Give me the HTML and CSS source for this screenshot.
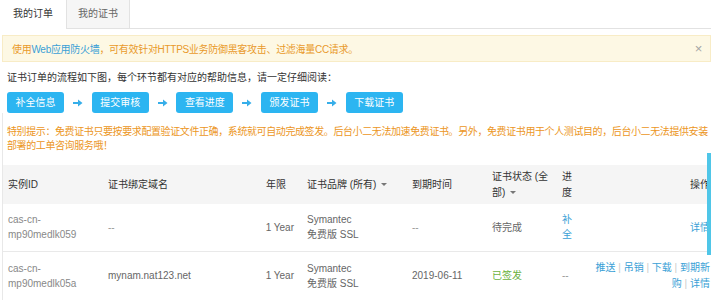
FILE: index.html
```html
<!DOCTYPE html>
<html lang="zh-CN">
<head>
  <meta charset="UTF-8">
  <meta name="viewport" content="width=device-width, initial-scale=1.0">
  <title>我的订单</title>
  <link rel="stylesheet" href="styles.css">
</head>
<body>
  <div class="tabs">
    <a class="tab active">我的订单</a>
    <a class="tab">我的证书</a>
  </div>

  <div class="alert">
    <span>使用<a class="link">Web应用防火墙</a>，可有效针对HTTPS业务防御黑客攻击、过滤海量CC请求。</span>
    <span class="close">×</span>
  </div>

  <p class="intro">证书订单的流程如下图，每个环节都有对应的帮助信息，请一定仔细阅读：</p>

  <div class="steps">
    <span class="step">补全信息</span>
    <span class="arrow"><svg width="10" height="8" viewBox="0 0 10 8"><path d="M0 3h5V0.5L9.5 4 5 7.5V5H0z"/></svg></span>
    <span class="step">提交审核</span>
    <span class="arrow"><svg width="10" height="8" viewBox="0 0 10 8"><path d="M0 3h5V0.5L9.5 4 5 7.5V5H0z"/></svg></span>
    <span class="step">查看进度</span>
    <span class="arrow"><svg width="10" height="8" viewBox="0 0 10 8"><path d="M0 3h5V0.5L9.5 4 5 7.5V5H0z"/></svg></span>
    <span class="step">颁发证书</span>
    <span class="arrow"><svg width="10" height="8" viewBox="0 0 10 8"><path d="M0 3h5V0.5L9.5 4 5 7.5V5H0z"/></svg></span>
    <span class="step">下载证书</span>
  </div>

  <div class="main">
    <p class="notice">
      <span>特别提示：免费证书只要按要求配置验证文件正确，系统就可自动完成签发。后台小二无法加速免费证书。另外，免费证书用于个人测试目的，后台小二无法提供安装</span>
      <span>部署的工单咨询服务哦！</span>
    </p>

    <table class="orders">
      <colgroup>
        <col class="w-id"><col class="w-domain"><col class="w-year"><col class="w-brand">
        <col class="w-date"><col class="w-status"><col class="w-progress"><col class="w-ops">
      </colgroup>
      <thead>
        <tr>
          <th class="c-id">实例ID</th>
          <th>证书绑定域名</th>
          <th class="c-year">年限</th>
          <th>证书品牌 (所有)<i class="caret"></i></th>
          <th>到期时间</th>
          <th>证书状态 (全部)<i class="caret"></i></th>
          <th class="c-progress">进度</th>
          <th class="c-ops">操作</th>
        </tr>
      </thead>
      <tbody>
        <tr>
          <td class="c-id">cas-cn-<br>mp90medlk059</td>
          <td class="muted">--</td>
          <td class="c-year">1 Year</td>
          <td>Symantec<br>免费版 SSL</td>
          <td class="muted">--</td>
          <td>待完成</td>
          <td class="c-progress"><a class="link">补全</a></td>
          <td class="c-ops"><a class="link">详情</a></td>
        </tr>
        <tr>
          <td class="c-id">cas-cn-<br>mp90medlk05a</td>
          <td>mynam.nat123.net</td>
          <td class="c-year">1 Year</td>
          <td>Symantec<br>免费版 SSL</td>
          <td>2019-06-11</td>
          <td class="ok">已签发</td>
          <td class="c-progress muted">--</td>
          <td class="c-ops ops">
            <div><a class="link">推送</a> <span class="sep">|</span> <a class="link">吊销</a> <span class="sep">|</span> <a class="link">下载</a> <span class="sep">|</span> <a class="link">到期新</a></div>
            <div><a class="link">购</a> <span class="sep">|</span> <a class="link">详情</a></div>
          </td>
        </tr>
      </tbody>
    </table>
  </div>

  <div class="scroll-hint"></div>
</body>
</html>
```

FILE: styles.css
```css
body {
  margin: 0;
  padding: 0;
  font-family: "Liberation Sans", "Noto Sans CJK SC", sans-serif;
  font-size: 10px;
  color: #333;
  background: #fff;
}

a {
  text-decoration: none;
  cursor: pointer;
}

.link {
  color: #3a9fd6;
}

/* tabs */
.tabs {
  display: flex;
  height: 29px;
}

.tabs::after {
  content: "";
  flex: 1;
  border-bottom: 1px solid #e2e2e2;
}

.tab {
  box-sizing: border-box;
  width: 64px;
  height: 29px;
  line-height: 27px;
  text-align: center;
  color: #666;
  background: #f6f6f6;
  border: 1px solid #e2e2e2;
  border-top: none;
}

.tab.active {
  width: 66px;
  color: #333;
  background: #fff;
  border: none;
}

/* alert */
.alert {
  box-sizing: border-box;
  display: flex;
  align-items: center;
  justify-content: space-between;
  height: 27px;
  margin: 6px 0 0 2px;
  padding: 0 8px 0 9px;
  background: #fdf8e4;
  border: 1px solid #f8ecc6;
  color: #e99a2b;
  letter-spacing: -0.3px;
}

.alert .close {
  color: #a5a5a5;
  font-size: 13px;
}

/* flow */
.intro {
  margin: 9px 0 0;
  padding-left: 7px;
  line-height: 14px;
}

.steps {
  display: flex;
  align-items: center;
  margin-top: 7px;
  padding-left: 7px;
}

.step {
  width: 57px;
  height: 21px;
  line-height: 21px;
  text-align: center;
  color: #fff;
  background: #2cb5f1;
  border-radius: 3px;
}

.arrow {
  width: 27.7px;
  display: flex;
  justify-content: center;
}

.arrow svg {
  fill: #36aee9;
}

/* notice + table */
.main {
  margin-left: 2px;
  padding-top: 12px;
  border-left: 1px solid #e8e8e8;
}

.notice {
  margin: 0 0 12px;
  padding-left: 4px;
  color: #ec9624;
  line-height: 14px;
  letter-spacing: -0.4px;
  white-space: nowrap;
}

.notice span {
  display: block;
}

.orders {
  width: 707px;
  border-collapse: collapse;
  table-layout: fixed;
}

.w-id { width: 97px; }
.w-domain { width: 150px; }
.w-year { width: 49px; }
.w-brand { width: 105px; }
.w-date { width: 80px; }
.w-status { width: 70px; }
.w-progress { width: 32px; }
.w-ops { width: 124px; }

.orders th {
  height: 39px;
  padding: 0 2px 0 8px;
  background: #f5f5f5;
  font-weight: normal;
  text-align: left;
  color: #333;
  line-height: 16px;
}

.orders td {
  padding: 8px 2px 9px 8px;
  line-height: 15px;
  color: #666;
  border-bottom: 1px solid #e9e9e9;
  vertical-align: middle;
}

.orders td.ops {
  line-height: 16px;
  padding: 8px 0 8px 8px;
  white-space: nowrap;
}

.orders .c-id {
  padding-left: 5px;
}

.orders td.c-id {
  color: #888;
}

.orders .c-year {
  text-align: right;
  padding-right: 5px;
}

.orders th.c-year {
  padding-right: 13px;
}

.orders .c-progress {
  padding-right: 6px;
}

.orders .c-ops {
  text-align: right;
  padding-right: 0;
}

.orders td.muted {
  color: #999;
}

.orders td.ok {
  color: #6bb23f;
}

.sep {
  color: #ccc;
}

.caret {
  display: inline-block;
  margin-left: 5px;
  vertical-align: middle;
  border-top: 3px solid #777;
  border-left: 3px solid transparent;
  border-right: 3px solid transparent;
}

.scroll-hint {
  position: absolute;
  top: 153px;
  right: 0;
  width: 4px;
  height: 102px;
  background: #4fc6e8;
}
```
